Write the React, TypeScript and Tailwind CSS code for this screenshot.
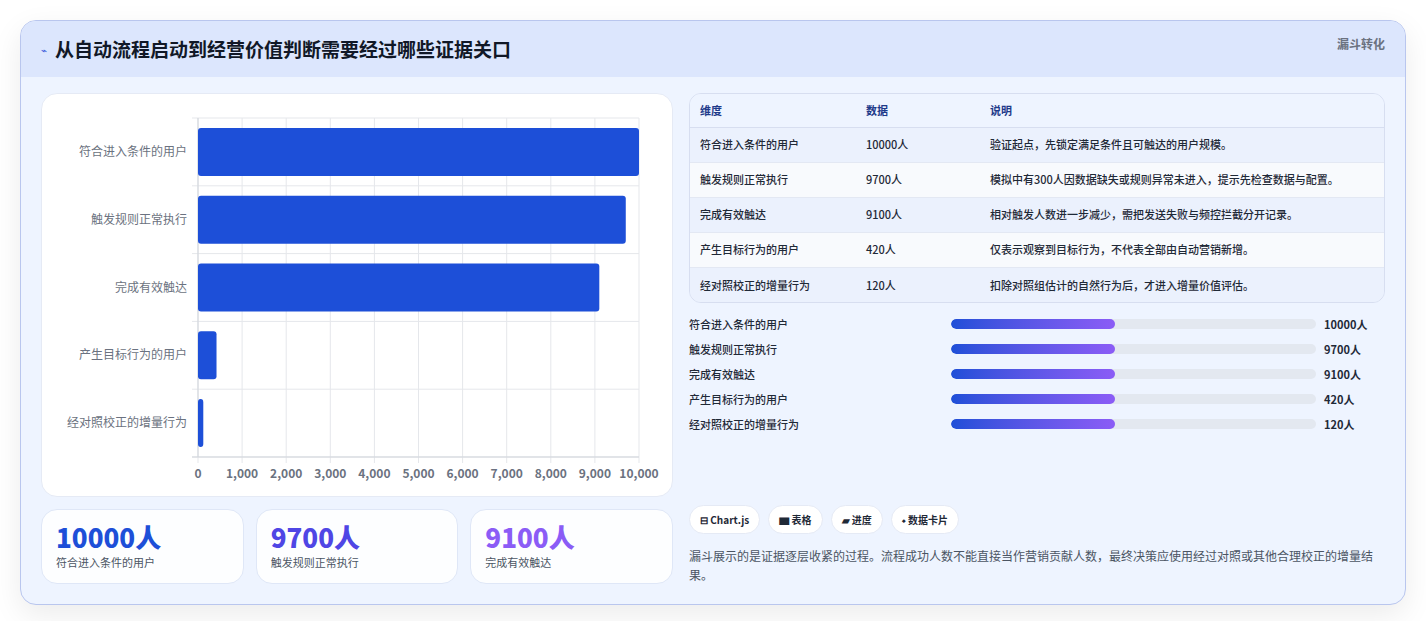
const font = { fontFamily: '"Noto Sans CJK SC", "Noto Sans", sans-serif' }

const rows = [
  { name: '符合进入条件的用户', value: 10000, note: '验证起点，先锁定满足条件且可触达的用户规模。' },
  { name: '触发规则正常执行', value: 9700, note: '模拟中有300人因数据缺失或规则异常未进入，提示先检查数据与配置。' },
  { name: '完成有效触达', value: 9100, note: '相对触发人数进一步减少，需把发送失败与频控拦截分开记录。' },
  { name: '产生目标行为的用户', value: 420, note: '仅表示观察到目标行为，不代表全部由自动营销新增。' },
  { name: '经对照校正的增量行为', value: 120, note: '扣除对照组估计的自然行为后，才进入增量价值评估。' },
]

function BarChart() {
  const x0 = 156
  const w = 441
  const y0 = 24
  const h = 339
  const step = h / 5
  return (
    <svg width="632" height="404" className="block">
      {Array.from({ length: 11 }).map((_, i) => (
        <line key={i} x1={x0 + (w * i) / 10} x2={x0 + (w * i) / 10} y1={y0} y2={y0 + h + 6} stroke="#e5e7eb" />
      ))}
      {Array.from({ length: 6 }).map((_, i) => (
        <line key={i} x1={x0 - 6} x2={x0 + w} y1={y0 + step * i} y2={y0 + step * i} stroke="#e5e7eb" />
      ))}
      <line x1={x0} x2={x0} y1={y0} y2={y0 + h} stroke="#d1d5db" />
      <line x1={x0 - 6} x2={x0 + w} y1={y0 + h} y2={y0 + h} stroke="#d1d5db" />
      {rows.map((r, i) => {
        const cy = y0 + step * i + step / 2
        return (
          <g key={r.name}>
            <rect x={x0} y={cy - 24} width={(w * r.value) / 10000} height={48} rx={3} fill="#1d4fd8" />
            <text x={x0 - 11} y={cy + 4} textAnchor="end" fontSize="12" fill="#6b7280" style={font}>{r.name}</text>
          </g>
        )
      })}
      {Array.from({ length: 11 }).map((_, i) => (
        <text key={i} x={x0 + (w * i) / 10} y={y0 + h + 21} textAnchor="middle" fontSize="12" fontWeight="600" fill="#6b7280" style={font}>
          {(i * 1000).toLocaleString('en-US')}
        </text>
      ))}
    </svg>
  )
}

function StatCard({ value, label, color }: { value: string; label: string; color: string }) {
  return (
    <div className="flex-1 rounded-2xl border border-[#dfe7f7] bg-white/90 px-3.5 pt-2.5 pb-3">
      <div className={`text-[26px] font-extrabold leading-[34px] ${color}`}>{value}</div>
      <div className="text-[11px] text-[#4b5563]">{label}</div>
    </div>
  )
}

export default function App() {
  return (
    <div style={font} className="min-h-[621px] bg-white pt-5 px-5">
      <div className="w-[1386px] overflow-hidden rounded-2xl border border-[#b9c6ee] bg-[#eef4ff] shadow-[0_10px_30px_rgba(0,0,0,0.08)]">
        <div className="flex h-[56px] items-start justify-between bg-[#dce6fd] pl-5 pr-5">
          <div className="flex items-center gap-2 pt-3.5">
            <span className="text-[10px] text-[#3b5bdb]">⌁</span>
            <h1 className="text-[19px] font-bold text-[#111827]">从自动流程启动到经营价值判断需要经过哪些证据关口</h1>
          </div>
          <div className="pt-3.5 text-[12px] font-semibold text-[#6b7280]">漏斗转化</div>
        </div>
        <div className="flex gap-4 px-5 pt-4 pb-5">
          <div className="flex w-[632px] flex-col gap-3">
            <div className="h-[404px] rounded-2xl border border-[#e5eaf5] bg-white">
              <BarChart />
            </div>
            <div className="flex gap-3">
              <StatCard value="10000人" label="符合进入条件的用户" color="text-[#1d4fd8]" />
              <StatCard value="9700人" label="触发规则正常执行" color="text-[#4f46e5]" />
              <StatCard value="9100人" label="完成有效触达" color="text-[#8b5cf6]" />
            </div>
          </div>
          <div className="flex w-[699px] flex-col">
            <div className="overflow-hidden rounded-xl border border-[#d7def0]">
              <table className="w-full text-left text-[11px]">
                <thead>
                  <tr className="h-[33px] border-b border-[#d7def0] bg-[#eef4ff] text-[#1e3a8a]">
                    <th className="w-[176px] pl-2.5 font-semibold">维度</th>
                    <th className="w-[124px] font-semibold">数据</th>
                    <th className="font-semibold">说明</th>
                  </tr>
                </thead>
                <tbody>
                  {rows.map((r, i) => (
                    <tr key={r.name} className={`h-[35px] text-[#1f2937] font-medium ${i < 4 ? 'border-b border-[#e3e8f3]' : ''} ${i % 2 === 0 ? 'bg-[#ebf1fd]' : 'bg-[#f8fafd]'}`}>
                      <td className="pl-2.5">{r.name}</td>
                      <td>{r.value}人</td>
                      <td>{r.note}</td>
                    </tr>
                  ))}
                </tbody>
              </table>
            </div>
            <div className="mt-3 flex flex-col gap-[7px]">
              {rows.map(r => (
                <div key={r.name} className="flex h-[18px] items-center text-[11px] font-medium text-[#1f2937]">
                  <div className="w-[262px]">{r.name}</div>
                  <div className="h-2.5 w-[365px] overflow-hidden rounded-full bg-[#e3e8f0]">
                    <div className="h-full w-[45%] rounded-full bg-gradient-to-r from-[#1d4fd8] to-[#8b5cf6]" />
                  </div>
                  <div className="ml-2 font-bold">{r.value}人</div>
                </div>
              ))}
            </div>
            <div className="mt-auto flex gap-2">
              {['⊟ Chart.js', '▆ 表格', '▰ 进度', '⬩ 数据卡片'].map(t => (
                <span key={t} className="rounded-full border border-[#e5eaf5] bg-white px-2.5 py-1.5 text-[10px] font-semibold text-[#1f2937]">{t}</span>
              ))}
            </div>
            <p className="mt-3 text-[12px] leading-[19px] text-[#4b5563]">
              漏斗展示的是证据逐层收紧的过程。流程成功人数不能直接当作营销贡献人数，最终决策应使用经过对照或其他合理校正的增量结果。
            </p>
          </div>
        </div>
      </div>
    </div>
  )
}
